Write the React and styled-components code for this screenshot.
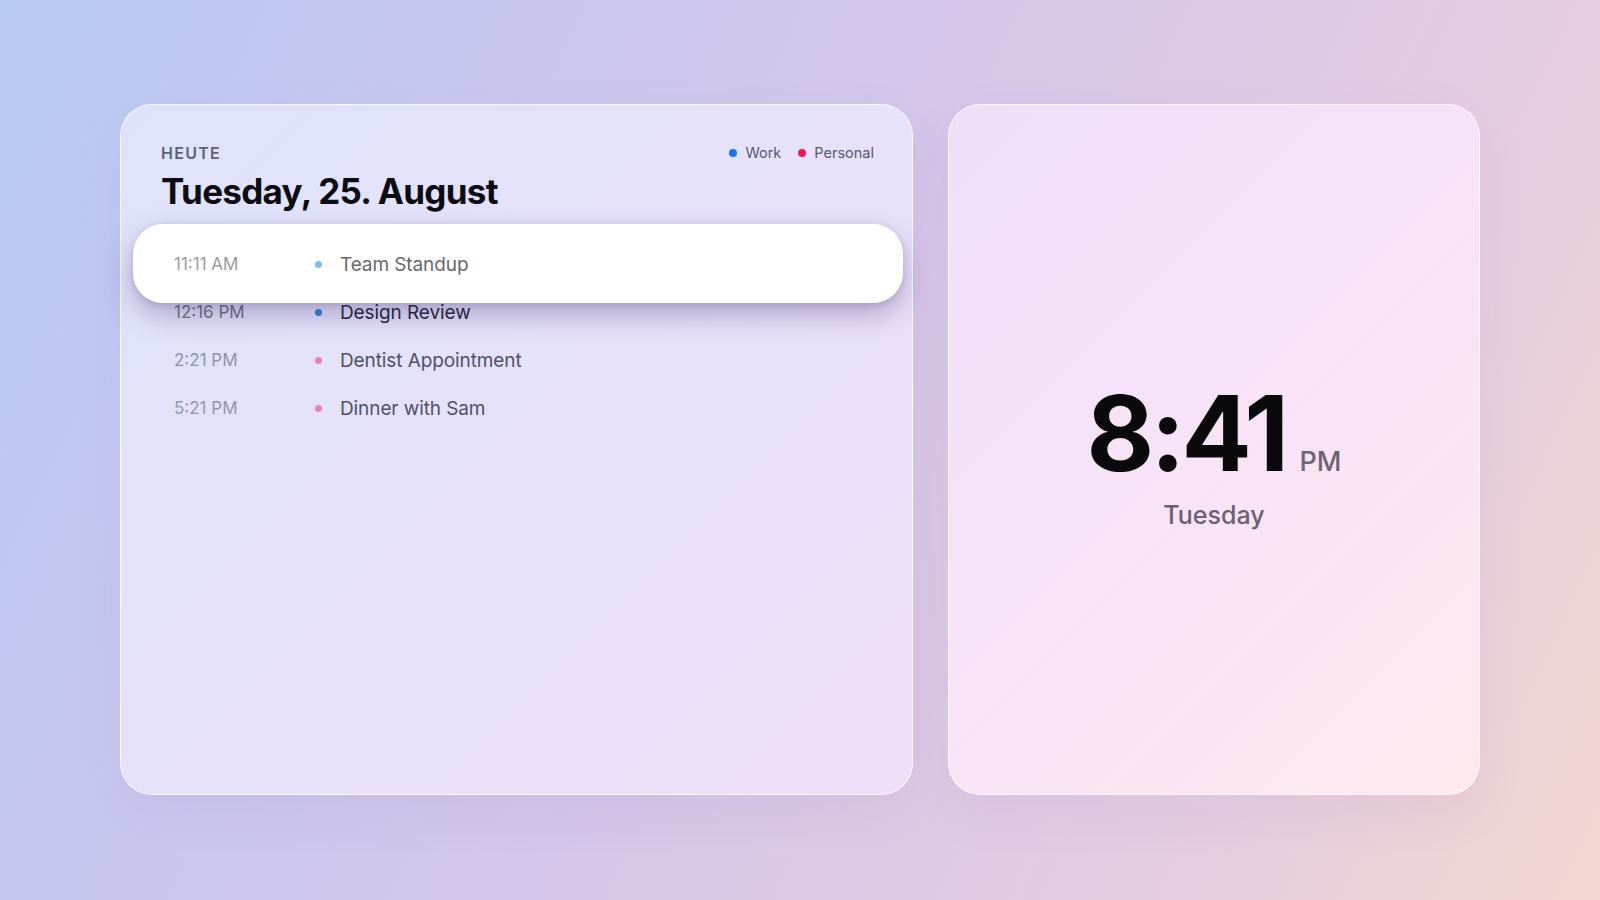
import React from "react";
import styled, { createGlobalStyle, css } from "styled-components";

const GlobalStyle = createGlobalStyle`
  html, body {
    margin: 0;
    padding: 0;
  }
  body {
    font-family: Inter, "Noto Sans", "Liberation Sans", sans-serif;
    -webkit-font-smoothing: antialiased;
  }
  * {
    box-sizing: border-box;
  }
`;

const Page = styled.main`
  height: 100vh;
  min-height: 900px;
  display: grid;
  grid-template-columns: 793px 1fr;
  gap: 35px;
  padding: 104px 120px 105px;
  background: linear-gradient(
    115deg,
    #b7caf5 0%,
    #c6c7ef 21%,
    #d5c6ea 48%,
    #e6cde0 79%,
    #f4d6d0 100%
  );
`;

const Card = styled.section`
  border-radius: 32px;
  border: 1.5px solid rgba(255, 255, 255, 0.75);
  box-shadow: 0 18px 50px rgba(110, 90, 160, 0.08);
  background: ${(p) =>
    p.$tone === "pink"
      ? "linear-gradient(135deg, #eedff9 0%, #f8e3f7 50%, #fdeaee 100%)"
      : "linear-gradient(135deg, #dee3fb 0%, #e7e1fb 50%, #efdff8 100%)"};
`;

const AgendaCard = styled(Card)`
  padding: 38px 40px;
  display: flex;
  flex-direction: column;
`;

const Header = styled.header`
  display: flex;
  justify-content: space-between;
  align-items: flex-start;
`;

const Eyebrow = styled.div`
  font-size: 16px;
  line-height: 20px;
  font-weight: 600;
  letter-spacing: 0.08em;
  color: #5d6177;
`;

const Title = styled.h1`
  margin: 7px 0 0;
  font-size: 35px;
  line-height: 42px;
  font-weight: 700;
  letter-spacing: -0.02em;
  color: #0c0c12;
`;

const Legend = styled.div`
  display: flex;
  align-items: center;
  gap: 17px;
  margin-top: 0;
  margin-right: -2px;
`;

const LegendItem = styled.span`
  display: flex;
  align-items: center;
  gap: 8px;
  font-size: 14.5px;
  line-height: 20px;
  color: #56596f;
`;

const Dot = styled.span`
  width: ${(p) => p.$size || 7}px;
  height: ${(p) => p.$size || 7}px;
  border-radius: 50%;
  flex-shrink: 0;
  background: ${(p) => p.$color};
`;

const List = styled.ul`
  list-style: none;
  margin: 28px 0 0;
  padding: 0;
`;

const Row = styled.li`
  position: relative;
  height: 48px;
  display: flex;
  align-items: center;
  padding-left: 13px;

  ${(p) =>
    p.$active &&
    css`
      z-index: 1;
      &::before {
        content: "";
        position: absolute;
        inset: -16px -31px -15px -28px;
        z-index: -1;
        background: #ffffff;
        border-radius: 30px;
        box-shadow: 0 12px 28px rgba(70, 50, 110, 0.34),
          0 2px 6px rgba(70, 50, 110, 0.14);
      }
    `}
`;

const Time = styled.span`
  width: 141px;
  font-size: 17px;
  color: ${(p) => p.$color};
`;

const EventName = styled.span`
  margin-left: 18px;
  font-size: 19px;
  letter-spacing: -0.005em;
  color: ${(p) => p.$color};
`;

const ClockCard = styled(Card)`
  display: flex;
  flex-direction: column;
  align-items: center;
  justify-content: center;
  padding-top: 12px;
`;

const ClockLine = styled.div`
  display: flex;
  align-items: baseline;
`;

const Digits = styled.span`
  font-size: 104px;
  line-height: 1;
  font-weight: 700;
  letter-spacing: -0.035em;
  color: #0a0a0c;
`;

const Meridiem = styled.span`
  margin-left: 14px;
  font-size: 27px;
  font-weight: 500;
  color: #6f6273;
`;

const Weekday = styled.div`
  margin-top: 14px;
  font-size: 25px;
  line-height: 32px;
  font-weight: 500;
  color: #6d6071;
`;

const events = [
  { time: "11:11 AM", name: "Team Standup", dot: "#7dbdf6", active: true, timeColor: "#9a9a9f", nameColor: "#68686d" },
  { time: "12:16 PM", name: "Design Review", dot: "#2f7fd6", timeColor: "#6c6e83", nameColor: "#22233a" },
  { time: "2:21 PM", name: "Dentist Appointment", dot: "#ec80a9", timeColor: "#9093a8", nameColor: "#4f5169" },
  { time: "5:21 PM", name: "Dinner with Sam", dot: "#ec80a9", timeColor: "#9396aa", nameColor: "#4f5169" },
];

const App = () => {
  return (
    <>
      <GlobalStyle />
      <Page>
        <AgendaCard>
          <Header>
            <div>
              <Eyebrow>HEUTE</Eyebrow>
              <Title>Tuesday, 25. August</Title>
            </div>
            <Legend>
              <LegendItem>
                <Dot $size={8} $color="#1a74ea" />
                Work
              </LegendItem>
              <LegendItem>
                <Dot $size={8} $color="#ea1a52" />
                Personal
              </LegendItem>
            </Legend>
          </Header>
          <List>
            {events.map((e) => (
              <Row key={e.time} $active={e.active}>
                <Time $color={e.timeColor}>{e.time}</Time>
                <Dot $color={e.dot} />
                <EventName $color={e.nameColor}>{e.name}</EventName>
              </Row>
            ))}
          </List>
        </AgendaCard>
        <ClockCard $tone="pink">
          <ClockLine>
            <Digits>8:41</Digits>
            <Meridiem>PM</Meridiem>
          </ClockLine>
          <Weekday>Tuesday</Weekday>
        </ClockCard>
      </Page>
    </>
  );
};

export default App;
